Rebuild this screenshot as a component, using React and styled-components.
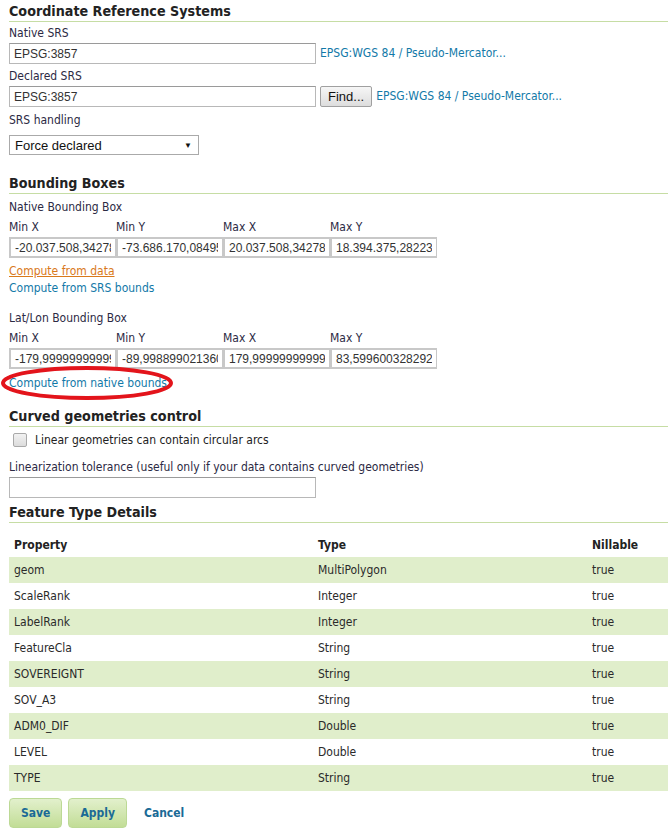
import React from 'react'
import styled, { createGlobalStyle } from 'styled-components'

const GlobalStyle = createGlobalStyle`
    body {
        margin: 0;
        background: #ffffff;
        font-family: "DejaVu Sans Condensed", "DejaVu Sans", Verdana, sans-serif;
        font-size: 12px;
        color: #333;
    }
`

const Page = styled.div`
    width: 668px;
    padding-left: 9px;
    box-sizing: border-box;
`

const Heading = styled.h2`
    margin: ${(p) => p.$top || 0}px 0 0;
    padding: 0 0 1px;
    font-size: 14.2px;
    line-height: 18px;
    font-weight: bold;
    color: #222;
    border-bottom: 1px solid #c6dda4;
`

const Label = styled.div`
    margin-top: ${(p) => p.$top || 0}px;
    line-height: 14px;
    font-size: 12px;
    color: #2c2a44;
`

const Row = styled.div`
    display: flex;
    align-items: center;
    gap: 4px;
    margin-top: ${(p) => p.$top || 0}px;
`

const TextInput = styled.input`
    box-sizing: border-box;
    width: ${(p) => p.$width || 307}px;
    height: 21px;
    margin: 0;
    padding: 0 4px;
    border: 1px solid #b8b8b8;
    border-top-color: #9a9a9a;
    font-family: "Liberation Sans", Arial, sans-serif;
    font-size: 12px;
    color: #333;
    background: #fff;
    outline: none;
`

const GrayButton = styled.button`
    height: 21px;
    padding: 0 7px;
    margin: 0;
    border: 1px solid #a0a0a0;
    border-radius: 2px;
    background: linear-gradient(#f6f6f6, #dddddd);
    font-family: "Liberation Sans", Arial, sans-serif;
    font-size: 13px;
    color: #111;
`

const Link = styled.a`
    display: ${(p) => (p.$block ? 'block' : 'inline')};
    color: ${(p) => (p.$visited ? '#d9791b' : '#1279a8')};
    text-decoration: ${(p) => (p.$visited ? 'underline' : 'none')};
    font-size: 12px;
    line-height: 17px;
    cursor: pointer;
`

const SelectBox = styled.div`
    box-sizing: border-box;
    width: 190px;
    height: 20px;
    margin-top: ${(p) => p.$top || 0}px;
    padding: 0 6px 0 5px;
    display: flex;
    align-items: center;
    justify-content: space-between;
    border: 1px solid #aaaaaa;
    font-family: "Liberation Sans", Arial, sans-serif;
    font-size: 13px;
    color: #111;
    span.arrow {
        font-size: 8px;
    }
`

const BoxGrid = styled.div`
    display: grid;
    grid-template-columns: repeat(4, 107px);
    margin-top: ${(p) => p.$top || 0}px;
    row-gap: 3px;
`

const BoxLabel = styled.div`
    line-height: 14px;
    color: #2c2a44;
`

const BoxInput = styled.input`
    box-sizing: border-box;
    width: 107px;
    height: 21px;
    margin: 0;
    padding: 0 4px;
    border: 2px solid #c8c8c8;
    border-right-width: 1px;
    font-family: "Liberation Sans", Arial, sans-serif;
    font-size: 12px;
    color: #333;
    outline: none;
`

const Circled = styled.div`
    position: relative;
    display: inline-block;
    svg {
        position: absolute;
        left: -9px;
        top: -11px;
        pointer-events: none;
    }
`

const CheckRow = styled.label`
    display: flex;
    align-items: center;
    gap: 8px;
    margin-top: ${(p) => p.$top || 0}px;
    padding-left: 4px;
    font-size: 12px;
    line-height: 14px;
    color: #222;
`

const CheckBox = styled.span`
    width: 12px;
    height: 12px;
    border: 1px solid #a9a9a9;
    border-radius: 2px;
    background: linear-gradient(#f2f2f2, #dcdcdc);
`

const Table = styled.table`
    width: 659px;
    margin-top: ${(p) => p.$top || 0}px;
    border-collapse: collapse;
    font-size: 12px;
    color: #2a2a2a;
    th {
        text-align: left;
        font-weight: bold;
        height: 25px;
        padding: 0 5px;
        color: #222;
    }
    td {
        height: 26px;
        padding: 0 5px;
    }
    tbody tr:nth-child(odd) {
        background: #e0eecb;
    }
`

const Actions = styled.div`
    display: flex;
    align-items: center;
    gap: 6px;
    margin-top: 7px;
`

const GreenButton = styled.button`
    height: 30px;
    padding: 0 ${(p) => p.$pad || 11}px;
    border: 1px solid #bcd995;
    border-radius: 4px;
    background: linear-gradient(#e2f0cc, #c2dd96);
    font-family: "DejaVu Sans Condensed", "DejaVu Sans", Verdana, sans-serif;
    font-size: 12px;
    font-weight: bold;
    color: #1a6a96;
`

const CancelLink = styled.a`
    margin-left: 11px;
    font-size: 12px;
    font-weight: bold;
    color: #1a6a96;
`

const attributes = [
    ['geom', 'MultiPolygon'],
    ['ScaleRank', 'Integer'],
    ['LabelRank', 'Integer'],
    ['FeatureCla', 'String'],
    ['SOVEREIGNT', 'String'],
    ['SOV_A3', 'String'],
    ['ADM0_DIF', 'Double'],
    ['LEVEL', 'Double'],
    ['TYPE', 'String'],
]

function BoundingBox({ values, top }) {
    return (
        <BoxGrid $top={top}>
            {['Min X', 'Min Y', 'Max X', 'Max Y'].map((l) => (
                <BoxLabel key={l}>{l}</BoxLabel>
            ))}
            {values.map((v, i) => (
                <BoxInput key={i} defaultValue={v} />
            ))}
        </BoxGrid>
    )
}

export default function App() {
    return (
        <Page>
            <GlobalStyle />
            <Heading $top={2}>Coordinate Reference Systems</Heading>
            <Label $top={4}>Native SRS</Label>
            <Row $top={3}>
                <TextInput defaultValue="EPSG:3857" />
                <Link>EPSG:WGS 84 / Pseudo-Mercator...</Link>
            </Row>
            <Label $top={5}>Declared SRS</Label>
            <Row $top={3}>
                <TextInput defaultValue="EPSG:3857" />
                <GrayButton>Find...</GrayButton>
                <Link>EPSG:WGS 84 / Pseudo-Mercator...</Link>
            </Row>
            <Label $top={6}>SRS handling</Label>
            <SelectBox $top={8}>
                <span>Force declared</span>
                <span className="arrow">▼</span>
            </SelectBox>

            <Heading $top={19}>Bounding Boxes</Heading>
            <Label $top={6}>Native Bounding Box</Label>
            <BoundingBox
                top={6}
                values={['-20.037.508,342789', '-73.686.170,084958', '20.037.508,342789', '18.394.375,282232']}
            />
            <Link $block $visited style={{ marginTop: 5, width: 'max-content' }}>Compute from data</Link>
            <Link $block>Compute from SRS bounds</Link>
            <Label $top={14}>Lat/Lon Bounding Box</Label>
            <BoundingBox
                top={6}
                values={['-179,999999999997', '-89,9988990213606', '179,999999999997', '83,5996003282927']}
            />
            <Circled style={{ marginTop: 6 }}>
                <Link $block>Compute from native bounds</Link>
                <svg width="176" height="38" viewBox="0 0 176 38">
                    <ellipse cx="87" cy="19" rx="84" ry="15" fill="none" stroke="#e3141b" strokeWidth="4" />
                </svg>
            </Circled>

            <Heading $top={15}>Curved geometries control</Heading>
            <CheckRow $top={6}>
                <CheckBox />
                Linear geometries can contain circular arcs
            </CheckRow>
            <Label $top={13}>Linearization tolerance (useful only if your data contains curved geometries)</Label>
            <TextInput defaultValue="" style={{ marginTop: 3, display: 'block' }} />

            <Heading $top={5}>Feature Type Details</Heading>
            <Table $top={9}>
                <thead>
                    <tr>
                        <th style={{ width: 294 }}>Property</th>
                        <th style={{ width: 264 }}>Type</th>
                        <th>Nillable</th>
                    </tr>
                </thead>
                <tbody>
                    {attributes.map(([name, type]) => (
                        <tr key={name}>
                            <td>{name}</td>
                            <td>{type}</td>
                            <td>true</td>
                        </tr>
                    ))}
                </tbody>
            </Table>
            <Actions>
                <GreenButton>Save</GreenButton>
                <GreenButton>Apply</GreenButton>
                <CancelLink>Cancel</CancelLink>
            </Actions>
        </Page>
    )
}
